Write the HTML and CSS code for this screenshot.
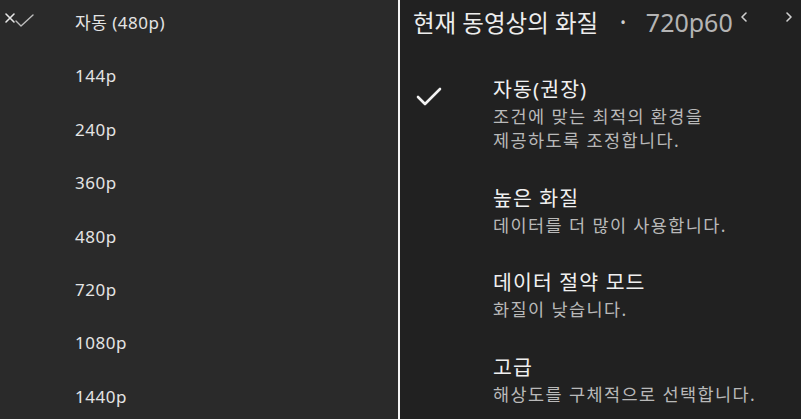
FILE: index.html
```html
<!DOCTYPE html>
<html lang="ko">
<head>
<meta charset="utf-8">
<link rel="stylesheet" href="styles.css">
</head>
<body>
<div class="screen">
  <section class="left">
    <svg class="close-check" width="36" height="20" viewBox="0 0 36 20">
      <path d="M4 4 L12 12 M12 4 L4 12" stroke="#e6e6e6" stroke-width="1.6" fill="none" stroke-linecap="round"/>
      <path d="M14 11 L19 16 L31 5" stroke="#bdbdbd" stroke-width="1.4" fill="none" stroke-linecap="round" stroke-linejoin="round"/>
    </svg>
    <ul class="res-list">
      <li>자동 (480p)</li>
      <li>144p</li>
      <li>240p</li>
      <li>360p</li>
      <li>480p</li>
      <li>720p</li>
      <li>1080p</li>
      <li>1440p</li>
    </ul>
  </section>
  <div class="divider"></div>
  <section class="right">
    <header class="head">
      <span class="head-title">현재 동영상의 화질</span>
      <span class="dot">•</span>
      <span class="current">720p60</span>
      <svg class="chev prev" width="10" height="14" viewBox="0 0 10 14"><path d="M7 3 L3 7 L7 11" stroke="#d0d0d0" stroke-width="1.6" fill="none" stroke-linecap="round" stroke-linejoin="round"/></svg>
      <svg class="chev next" width="10" height="14" viewBox="0 0 10 14"><path d="M3 3 L7 7 L3 11" stroke="#d0d0d0" stroke-width="1.6" fill="none" stroke-linecap="round" stroke-linejoin="round"/></svg>
    </header>
    <div class="options">
      <div class="option">
        <div class="mark">
          <svg width="28" height="22" viewBox="0 0 28 22"><path d="M3 11 L10 18 L25 3" stroke="#f2f2f2" stroke-width="2.6" fill="none" stroke-linecap="round" stroke-linejoin="round"/></svg>
        </div>
        <div class="texts">
          <div class="opt-title">자동(권장)</div>
          <div class="opt-sub">조건에 맞는 최적의 환경을<br>제공하도록 조정합니다.</div>
        </div>
      </div>
      <div class="option">
        <div class="mark"></div>
        <div class="texts">
          <div class="opt-title">높은 화질</div>
          <div class="opt-sub">데이터를 더 많이 사용합니다.</div>
        </div>
      </div>
      <div class="option">
        <div class="mark"></div>
        <div class="texts">
          <div class="opt-title">데이터 절약 모드</div>
          <div class="opt-sub">화질이 낮습니다.</div>
        </div>
      </div>
      <div class="option">
        <div class="mark"></div>
        <div class="texts">
          <div class="opt-title">고급</div>
          <div class="opt-sub">해상도를 구체적으로 선택합니다.</div>
        </div>
      </div>
    </div>
  </section>
</div>
</body>
</html>
```
FILE: styles.css
```css
* { box-sizing: border-box; }
html, body { margin: 0; padding: 0; }
body {
  width: 801px;
  height: 419px;
  overflow: hidden;
  background: #222222;
  font-family: "Noto Sans", "Noto Sans CJK KR", sans-serif;
}
.screen {
  display: flex;
  width: 801px;
  height: 419px;
}
.left {
  position: relative;
  width: 398px;
  height: 100%;
  background: #2a2a2a;
  flex: none;
}
.close-check {
  position: absolute;
  left: 2px;
  top: 10px;
}
.res-list {
  list-style: none;
  margin: 0;
  padding: 13px 0 0 75px;
  display: flex;
  flex-direction: column;
  gap: 33.4px;
}
.res-list li {
  height: 20px;
  line-height: 20px;
  font-size: 17px;
  color: #e4e4e4;
  letter-spacing: 0.5px;
}
.divider {
  width: 2px;
  height: 100%;
  background: #f4f4f4;
  flex: none;
}
.right {
  flex: 1;
  height: 100%;
  background: #212121;
  padding-left: 13px;
}
.head {
  height: 44px;
  display: flex;
  align-items: center;
  color: #ededed;
  font-size: 23.5px;
}
.head-title { white-space: nowrap; }
.dot {
  margin-left: 22px;
  font-size: 15px;
  color: #cfcfcf;
}
.current {
  margin-left: 20px;
  color: #b4b4b4;
  font-size: 25px;
}
.chev { align-self: flex-start; margin-top: 10px; }
.prev { margin-left: 6px; }
.next { margin-left: 35px; }
.options {
  margin-top: 30px;
  display: flex;
  flex-direction: column;
  gap: 30.7px;
}
.option {
  display: flex;
}
.mark {
  width: 80px;
  flex: none;
  padding-top: 12px;
  padding-left: 2px;
}
.opt-title {
  font-size: 20.5px;
  line-height: 30px;
  color: #f0f0f0;
  letter-spacing: 1.1px;
}
.opt-sub {
  font-size: 17.5px;
  line-height: 24px;
  color: #b9b9b9;
  letter-spacing: 1.4px;
}
```
